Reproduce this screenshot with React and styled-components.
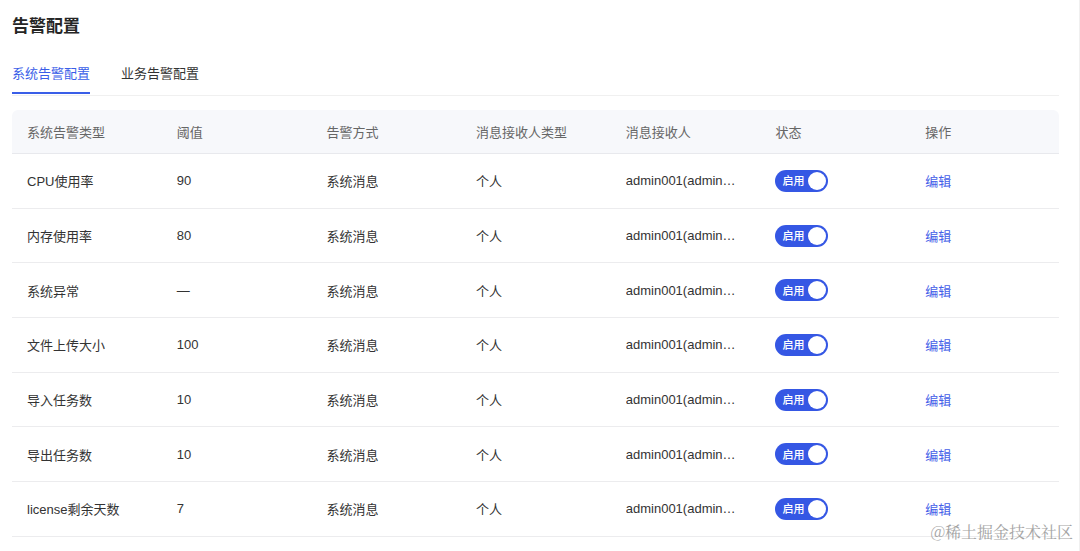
import styled, { createGlobalStyle } from 'styled-components'

const GlobalStyle = createGlobalStyle`
   body {
      margin: 0;
      background: #ffffff;
      font-family: "Liberation Sans", "Noto Sans CJK SC", sans-serif;
      color: #333333;
   }
`

const rows = [
   { type: 'CPU使用率', value: '90' },
   { type: '内存使用率', value: '80' },
   { type: '系统异常', value: '—' },
   { type: '文件上传大小', value: '100' },
   { type: '导入任务数', value: '10' },
   { type: '导出任务数', value: '10' },
   { type: 'license剩余天数', value: '7' },
]

const columns = ['系统告警类型', '阈值', '告警方式', '消息接收人类型', '消息接收人', '状态', '操作']

const App = () => {
   return (
      <Page>
         <GlobalStyle />
         <Title>告警配置</Title>
         <Tabs>
            <Tab active>系统告警配置</Tab>
            <Tab>业务告警配置</Tab>
         </Tabs>
         <Table>
            <HeadRow>
               {columns.map((c) => (
                  <HeadCell key={c}>{c}</HeadCell>
               ))}
            </HeadRow>
            {rows.map((r) => (
               <Row key={r.type}>
                  <Cell>{r.type}</Cell>
                  <Cell>{r.value}</Cell>
                  <Cell>系统消息</Cell>
                  <Cell>个人</Cell>
                  <Cell>
                     <Ellipsis title="admin001(admin001)">admin001(admin001)</Ellipsis>
                  </Cell>
                  <Cell>
                     <Switch>
                        <SwitchLabel>启用</SwitchLabel>
                        <Knob />
                     </Switch>
                  </Cell>
                  <Cell>
                     <EditLink>编辑</EditLink>
                  </Cell>
               </Row>
            ))}
         </Table>
         <Watermark>@稀土掘金技术社区</Watermark>
      </Page>
   )
}

const Page = styled.div`
   position: relative;
   width: 1080px;
   height: 551px;
   padding: 13px 20px 0 12px;
   box-sizing: border-box;
   overflow: hidden;
   border-right: 1px solid #f0f0f0;
`

const Title = styled.h1`
   margin: 0;
   font-family: "Noto Sans CJK SC", sans-serif;
   font-size: 17px;
   line-height: 24px;
   font-weight: 700;
   color: #262626;
`

const Tabs = styled.div`
   display: flex;
   gap: 31px;
   margin-top: 26px;
   border-bottom: 1px solid #f0f0f0;
`

const Tab = styled.div`
   font-family: "Noto Sans CJK SC", sans-serif;
   font-size: 13px;
   line-height: 20px;
   padding-bottom: 9px;
   color: ${(p) => (p.active ? '#3a5ee8' : '#333333')};
   border-bottom: 2px solid ${(p) => (p.active ? '#3a5ee8' : 'transparent')};
   margin-bottom: 1px;
`

const Table = styled.div`
   margin-top: 14px;
   display: flex;
   flex-direction: column;
`

const HeadRow = styled.div`
   display: grid;
   grid-template-columns: repeat(7, 149.7px);
   height: 44px;
   box-sizing: border-box;
   align-items: center;
   background: #f7f8fb;
   border-radius: 6px 6px 0 0;
   border-bottom: 1px solid #e8e9ed;
`

const HeadCell = styled.div`
   padding-left: 15px;
   font-size: 13px;
   color: #666666;
`

const Row = styled.div`
   display: grid;
   grid-template-columns: repeat(7, 149.7px);
   height: 54.7px;
   box-sizing: border-box;
   align-items: center;
   border-bottom: 1px solid #ececee;
`

const Cell = styled.div`
   padding-left: 15px;
   font-size: 13px;
   color: #333333;
   min-width: 0;
`

const Ellipsis = styled.div`
   width: 116px;
   white-space: nowrap;
   overflow: hidden;
   text-overflow: ellipsis;
`

const Switch = styled.div`
   display: inline-flex;
   align-items: center;
   justify-content: space-between;
   width: 53px;
   height: 22px;
   padding: 0 2px 0 7px;
   box-sizing: border-box;
   border-radius: 11px;
   background: #3557e4;
   vertical-align: middle;
`

const SwitchLabel = styled.span`
   font-family: "Noto Sans CJK SC", sans-serif;
   font-size: 11px;
   font-weight: 500;
   color: #ffffff;
   line-height: 1;
`

const Knob = styled.span`
   width: 18px;
   height: 18px;
   border-radius: 50%;
   background: #ffffff;
`

const EditLink = styled.a`
   font-size: 13px;
   color: #4560e8;
   cursor: pointer;
`

const Watermark = styled.div`
   position: absolute;
   right: 6px;
   bottom: 8px;
   font-family: "Noto Serif CJK SC", "Liberation Serif", serif;
   font-size: 16px;
   color: #9a9a9a;
   opacity: 0.9;
`

export default App
